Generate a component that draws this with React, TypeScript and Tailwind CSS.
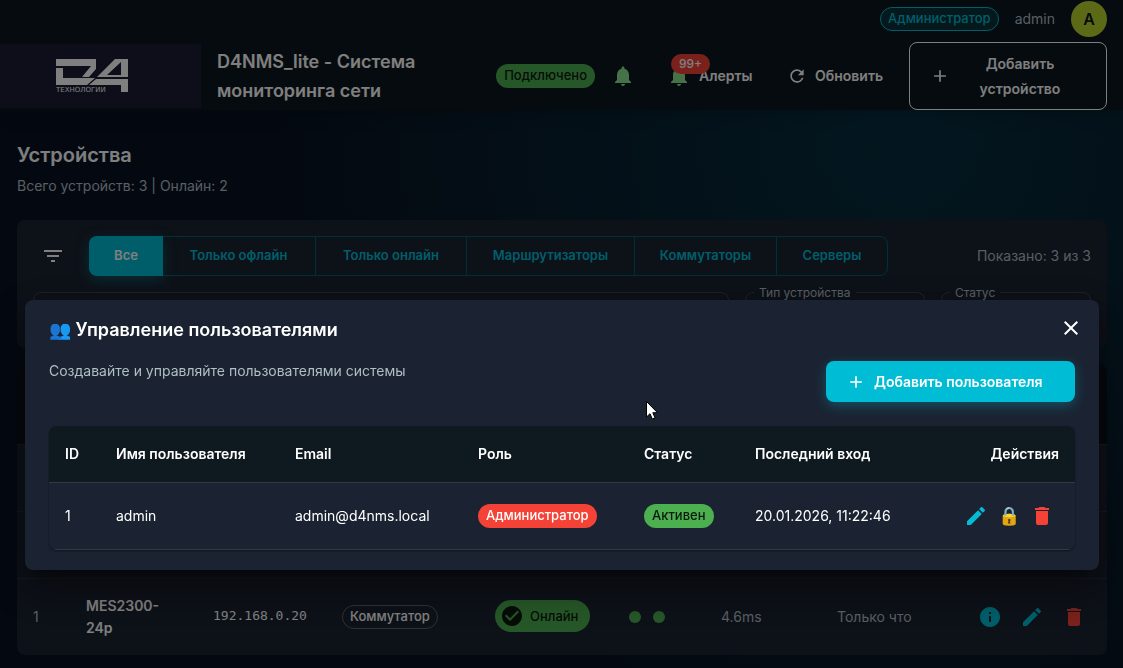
import type { ReactNode } from "react";
import {
  MdAdd,
  MdCheckCircle,
  MdClose,
  MdDelete,
  MdEdit,
  MdFilterList,
  MdInfo,
  MdNotifications,
  MdRefresh,
} from "react-icons/md";

const filters = [
  { label: "Все", width: "w-[74px]" },
  { label: "Только офлайн", width: "w-[153px]" },
  { label: "Только онлайн", width: "w-[151px]" },
  { label: "Маршрутизаторы", width: "w-[168px]" },
  { label: "Коммутаторы", width: "w-[142px]" },
  { label: "Серверы", width: "w-[111px]" },
];

const users = [
  {
    id: 1,
    name: "admin",
    email: "admin@d4nms.local",
    role: "Администратор",
    status: "Активен",
    lastLogin: "20.01.2026, 11:22:46",
  },
];

const Logo = () => (
  <svg width="72" height="34" viewBox="0 0 72 34" fill="#fff">
    <path d="M0 0H40V10L33 18H26L35 7H0Z" />
    <path d="M0 9H7V19H39L31 26H0Z" />
    <path fillRule="evenodd" d="M41 18L59 0H72V18ZM51 16H65V3Z" />
    <path d="M40 20H72V33H65V26H33Z" />
    <text x="0" y="33" fontSize="7" fontFamily="DejaVu Sans, sans-serif">
      ТЕХНОЛОГИИ
    </text>
  </svg>
);

const IconButton = ({ label, className = "", children }: { label: string; className?: string; children: ReactNode }) => (
  <button type="button" aria-label={label} className={`flex h-[34px] w-[34px] items-center justify-center ${className}`}>
    {children}
  </button>
);

const Header = () => (
  <header className="bg-[#0b161c] shadow-lg">
    <div className="flex h-[38px] items-center justify-end gap-4 pr-4">
      <span className="flex h-6 items-center rounded-full border border-[#00bcd4] bg-[#0b3039] px-[7px] text-[13px] font-medium text-[#00bcd4]">
        Администратор
      </span>
      <span className="text-sm text-[#b0bec5]">admin</span>
      <span className="flex h-9 w-9 items-center justify-center rounded-full bg-[#b8d42e] text-base font-semibold text-[#101418]">
        A
      </span>
    </div>

    <div className="flex items-center pt-1 pr-4">
      <div className="flex h-16 w-[201px] shrink-0 items-center bg-[#1a1c34] pl-14">
        <Logo />
      </div>
      <h1 className="ml-4 w-[269px] shrink-0 pr-8 text-lg leading-[29px] font-semibold">
        D4NMS_lite - Система мониторинга сети
      </h1>
      <div className="flex flex-1 items-center justify-end">
        <span className="flex h-6 items-center rounded-full bg-[#4caf50] px-2 text-[13px] font-medium text-[#0b1a0c]">
          Подключено
        </span>
        <button type="button" aria-label="Уведомления" className="ml-2 flex w-10 justify-center text-[#8be78f]">
          <MdNotifications size={24} />
        </button>
        <button type="button" className="relative ml-4 flex w-[104px] items-center gap-2 px-2 text-sm font-semibold">
          <MdNotifications size={24} className="shrink-0 text-[#8be78f]" />
          Алерты
          <span className="absolute -top-[10px] left-3 flex h-5 items-center rounded-full bg-[#f44336] px-2 text-xs font-medium">
            99+
          </span>
        </button>
        <button type="button" className="ml-4 flex w-[116px] items-center gap-2 px-2 text-sm font-semibold">
          <MdRefresh size={20} className="shrink-0" />
          Обновить
        </button>
        <button
          type="button"
          className="ml-[14px] flex w-[198px] shrink-0 items-center gap-2 rounded-lg border border-white py-2 pr-6 pl-5 text-sm leading-[25px] font-semibold"
        >
          <MdAdd size={20} className="shrink-0" />
          <span className="flex-1">Добавить устройство</span>
        </button>
      </div>
    </div>
  </header>
);

const Field = ({ label, className }: { label?: string; className: string }) => (
  <fieldset className={`h-[48px] min-w-0 rounded-lg border border-[#3c434f] ${className}`}>
    {label && <legend className="ml-2 h-0 px-[5px] text-xs leading-[0px] text-[#b0bec5]">{label}</legend>}
    <input aria-label={label ?? "Поиск"} className="w-full bg-transparent px-3 outline-none" />
  </fieldset>
);

const FilterPanel = () => (
  <section className="mt-6 rounded-lg bg-[#1a2230] p-4 pb-2">
    <div className="flex items-center">
      <button type="button" aria-label="Фильтры" className="flex h-10 w-10 items-center justify-center">
        <MdFilterList size={24} />
      </button>
      <div className="ml-4 flex h-10 rounded-lg border border-[#00616e]">
        {filters.map((filter, index) => (
          <button
            key={filter.label}
            type="button"
            className={`${filter.width} text-[13px] font-semibold ${
              index === 0
                ? "-m-px rounded-l-lg bg-[#00bcd4] text-white shadow-[0_4px_14px_rgba(0,188,212,0.35)]"
                : "text-[#00bcd4]"
            } ${index > 1 ? "border-l border-[#00616e]" : ""}`}
          >
            {filter.label}
          </button>
        ))}
      </div>
      <span className="ml-auto text-sm text-[#b0bec5]">Показано: 3 из 3</span>
    </div>
    <div className="mt-4 flex items-start gap-4">
      <Field className="flex-1" />
      <Field label="Тип устройства" className="w-[180px]" />
      <Field label="Статус" className="w-[150px]" />
    </div>
  </section>
);

const DeviceTable = () => (
  <table className="mt-4 w-full table-fixed overflow-hidden rounded-lg bg-[#1a2230] text-left text-sm text-[#b0bec5]">
    <colgroup>
      <col className="w-[53px]" />
      <col className="w-[127px]" />
      <col className="w-[129px]" />
      <col className="w-[153px]" />
      <col className="w-[134px]" />
      <col className="w-[92px]" />
      <col className="w-[116px]" />
      <col className="w-[120px]" />
      <col />
    </colgroup>
    <thead>
      <tr className="h-20 bg-[#0b1218]">
        <th colSpan={9} />
      </tr>
    </thead>
    <tbody>
      <tr className="h-[67px] border-t border-[#29303c]">
        <td colSpan={9} />
      </tr>
      <tr className="h-[67px] border-t border-[#29303c]">
        <td colSpan={9} />
      </tr>
      <tr className="h-[77px] border-t border-[#29303c]">
        <td className="px-4">1</td>
        <td className="pl-4 leading-[22px] font-semibold text-white">
          MES2300-
          <br />
          24p
        </td>
        <td className="px-4 font-['DejaVu_Sans_Mono',monospace] text-[13px] text-white">192.168.0.20</td>
        <td className="px-4">
          <span className="inline-flex h-6 items-center rounded-full border border-[#5c626c] px-[7px] text-[13px] font-medium text-white">
            Коммутатор
          </span>
        </td>
        <td className="pl-4">
          <span className="inline-flex h-8 items-center gap-[6px] rounded-full bg-[#4caf50] pr-3 pl-[5px] text-[13px] font-medium text-[#0b1a0c]">
            <MdCheckCircle size={24} />
            Онлайн
          </span>
        </td>
        <td className="px-4">
          <div className="flex gap-3">
            <span className="h-3 w-3 rounded-full bg-[#4caf50]" />
            <span className="h-3 w-3 rounded-full bg-[#4caf50]" />
          </div>
        </td>
        <td className="px-4">4.6ms</td>
        <td className="px-4">Только что</td>
        <td className="pr-4">
          <div className="flex justify-end gap-2 text-[#00bcd4]">
            <IconButton label="Информация">
              <MdInfo size={24} />
            </IconButton>
            <IconButton label="Изменить">
              <MdEdit size={24} />
            </IconButton>
            <IconButton label="Удалить" className="text-[#f44336]">
              <MdDelete size={24} />
            </IconButton>
          </div>
        </td>
      </tr>
    </tbody>
  </table>
);

const UsersDialog = () => (
  <div
    role="dialog"
    aria-labelledby="users-title"
    className="w-full rounded-lg bg-[#1b2332] px-6 pt-3 pb-5 shadow-[0_11px_15px_-7px_rgba(0,0,0,0.4),0_16px_38px_3px_rgba(0,0,0,0.4)]"
  >
    <div className="flex h-8 items-center justify-between">
      <h2 id="users-title" className="pt-1 text-lg font-semibold">
        👥 Управление пользователями
      </h2>
      <button type="button" aria-label="Закрыть" className="-mr-3 p-1">
        <MdClose size={24} />
      </button>
    </div>

    <div className="mt-[17px] flex items-start justify-between">
      <p className="text-sm text-[#b0bec5]">Создавайте и управляйте пользователями системы</p>
      <button
        type="button"
        className="flex h-[41px] w-[249px] items-center gap-2 rounded-lg bg-[#00bcd4] px-5 text-sm font-semibold shadow-[0_4px_12px_rgba(0,188,212,0.3)]"
      >
        <MdAdd size={20} />
        Добавить пользователя
      </button>
    </div>

    <div className="mt-6 overflow-hidden rounded-lg shadow-[0_1px_2px_rgba(0,0,0,0.5)]">
      <table className="w-full table-fixed text-left text-sm">
        <colgroup>
          <col className="w-[51px]" />
          <col className="w-[179px]" />
          <col className="w-[183px]" />
          <col className="w-[166px]" />
          <col className="w-[111px]" />
          <col className="w-[190px]" />
          <col />
        </colgroup>
        <thead>
          <tr className="h-14 border-b border-[#323a47] bg-[#0f1920]">
            <th className="px-4 font-semibold">ID</th>
            <th className="px-4 font-semibold">Имя пользователя</th>
            <th className="px-4 font-semibold">Email</th>
            <th className="px-4 font-semibold">Роль</th>
            <th className="px-4 font-semibold">Статус</th>
            <th className="px-4 font-semibold">Последний вход</th>
            <th className="px-4 text-right font-semibold">Действия</th>
          </tr>
        </thead>
        <tbody>
          {users.map((user) => (
            <tr key={user.id} className="h-[67px] border-b border-[#323a47]">
              <td className="px-4">{user.id}</td>
              <td className="px-4">{user.name}</td>
              <td className="px-4">{user.email}</td>
              <td className="px-4">
                <span className="inline-flex h-6 items-center rounded-full bg-[#f44336] px-2 text-[13px] font-medium">
                  {user.role}
                </span>
              </td>
              <td className="px-4">
                <span className="inline-flex h-6 items-center rounded-full bg-[#4caf50] px-2 text-[13px] font-medium text-[#0b1a0c]">
                  {user.status}
                </span>
              </td>
              <td className="px-4">{user.lastLogin}</td>
              <td className="px-4">
                <div className="flex items-center justify-end">
                  <IconButton label="Изменить" className="text-[#00bcd4]">
                    <MdEdit size={24} />
                  </IconButton>
                  <button type="button" aria-label="Сменить пароль" className="w-8 text-lg leading-6">
                    🔒
                  </button>
                  <IconButton label="Удалить" className="text-[#f44336]">
                    <MdDelete size={24} />
                  </IconButton>
                </div>
              </td>
            </tr>
          ))}
        </tbody>
      </table>
    </div>
  </div>
);

const App = () => {
  return (
    <div className="min-h-screen bg-[#081222] bg-[radial-gradient(circle_at_80%_20%,rgba(0,188,212,0.16),transparent_60%)] font-[Inter,sans-serif] text-white">
      <Header />
      <main className="pt-[31px] pr-4 pb-3 pl-[17px]">
        <h2 className="text-xl leading-7 font-semibold">Устройства</h2>
        <p className="mt-[7px] text-sm text-[#b0bec5]">Всего устройств: 3 | Онлайн: 2</p>
        <FilterPanel />
        <DeviceTable />
      </main>

      {/* Modal */}
      <div className="fixed inset-0 flex items-start bg-black/50 pt-[300px] pr-6 pl-[25px]">
        <UsersDialog />
      </div>

      {/* Pointer */}
      <svg className="pointer-events-none fixed top-[401px] left-[646px]" width="12" height="19" viewBox="0 0 12 19">
        <path d="M.5.5V16L4 12.7L6.3 18L9 16.8L6.8 11.7H11.5Z" fill="#fff" stroke="#000" />
      </svg>
    </div>
  );
};

export default App;
